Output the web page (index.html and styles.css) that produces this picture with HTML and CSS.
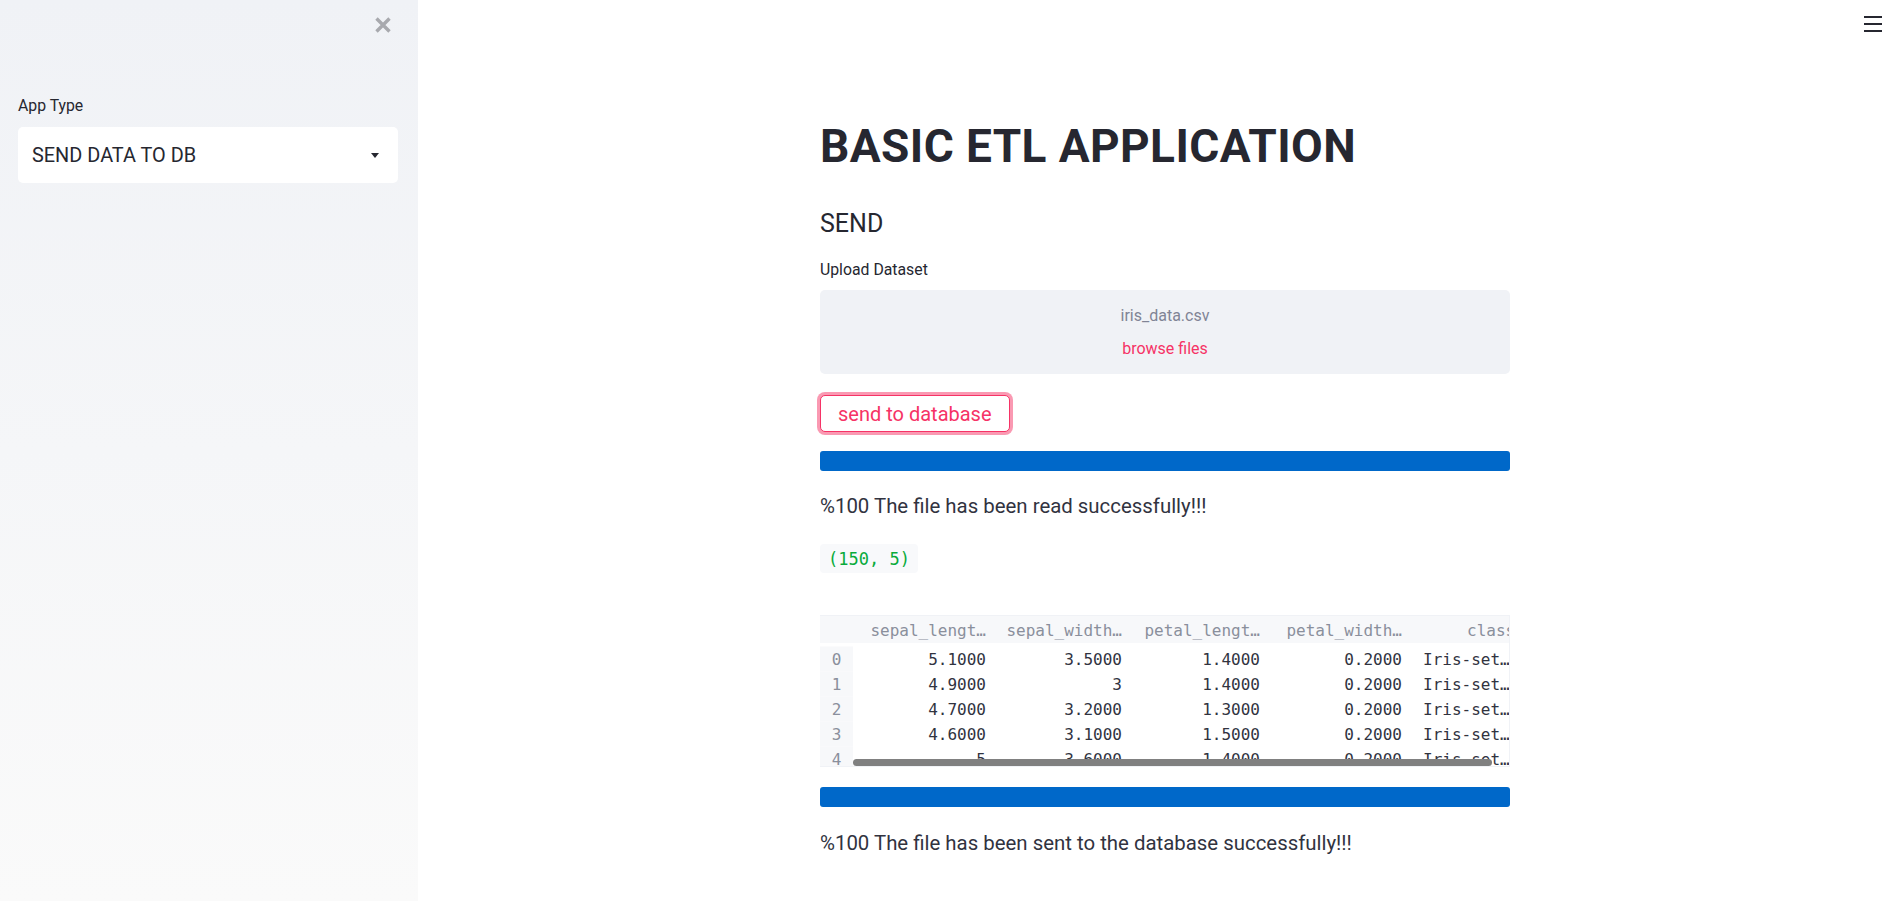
FILE: index.html
```html
<!DOCTYPE html>
<html lang="en">
<head>
<meta charset="utf-8">
<title>Basic ETL Application</title>
<link rel="stylesheet" href="styles.css">
</head>
<body>
<aside class="sidebar">
  <div class="sidebar-head">
    <button class="close-btn" aria-label="Close sidebar">
      <svg width="18" height="18" viewBox="0 0 18 18"><path d="M2.5 2.5 L15.5 15.5 M15.5 2.5 L2.5 15.5" stroke="#a8a9ae" stroke-width="3.4" stroke-linecap="butt"/></svg>
    </button>
  </div>
  <div class="field">
    <label class="field-label">App Type</label>
    <div class="select">
      <span class="select-value">SEND DATA TO DB</span>
      <svg class="select-arrow" width="8" height="5" viewBox="0 0 8 5"><path d="M0 0 H8 L4 5 Z" fill="#262730"/></svg>
    </div>
  </div>
</aside>
<main class="main">
  <header class="toolbar">
    <svg width="18" height="16" viewBox="0 0 18 16"><rect x="0" y="0" width="18" height="2" fill="#262730"/><rect x="0" y="7" width="18" height="2" fill="#262730"/><rect x="0" y="14" width="18" height="2" fill="#262730"/></svg>
  </header>
  <div class="content">
    <h1 class="title">BASIC ETL APPLICATION</h1>
    <h3 class="subtitle">SEND</h3>
    <div class="uploader">
      <div class="uploader-label">Upload Dataset</div>
      <div class="dropzone">
        <div class="file-name">iris_data.csv</div>
        <div class="browse">browse files</div>
      </div>
    </div>
    <button class="send-btn">send to database</button>
    <div class="progress"><div class="progress-fill"></div></div>
    <p class="message msg-read">%100 The file has been read successfully!!!</p>
    <code class="code">(150, 5)</code>
    <div class="dataframe">
      <div class="df-grid">
        <div class="df-head df-idx"></div>
        <div class="df-head">sepal_lengt…</div>
        <div class="df-head">sepal_width…</div>
        <div class="df-head">petal_lengt…</div>
        <div class="df-head">petal_width…</div>
        <div class="df-head df-class">class</div>

        <div class="df-idx">0</div><div class="df-cell">5.1000</div><div class="df-cell">3.5000</div><div class="df-cell">1.4000</div><div class="df-cell">0.2000</div><div class="df-cell df-text">Iris-set…</div>
        <div class="df-idx">1</div><div class="df-cell">4.9000</div><div class="df-cell">3</div><div class="df-cell">1.4000</div><div class="df-cell">0.2000</div><div class="df-cell df-text">Iris-set…</div>
        <div class="df-idx">2</div><div class="df-cell">4.7000</div><div class="df-cell">3.2000</div><div class="df-cell">1.3000</div><div class="df-cell">0.2000</div><div class="df-cell df-text">Iris-set…</div>
        <div class="df-idx">3</div><div class="df-cell">4.6000</div><div class="df-cell">3.1000</div><div class="df-cell">1.5000</div><div class="df-cell">0.2000</div><div class="df-cell df-text">Iris-set…</div>
        <div class="df-idx">4</div><div class="df-cell">5</div><div class="df-cell">3.6000</div><div class="df-cell">1.4000</div><div class="df-cell">0.2000</div><div class="df-cell df-text">Iris-set…</div>
      </div>
      <div class="df-scrollbar"></div>
    </div>
    <div class="progress progress-2"><div class="progress-fill"></div></div>
    <p class="message msg-sent">%100 The file has been sent to the database successfully!!!</p>
  </div>
</main>
</body>
</html>
```

FILE: styles.css
```css
* { box-sizing: border-box; }

html, body {
  margin: 0;
  padding: 0;
  height: 901px;
  overflow: hidden;
}

body {
  display: flex;
  font-family: Roboto, "Liberation Sans", sans-serif;
  color: #262730;
  background: #ffffff;
}

/* Sidebar */
.sidebar {
  width: 418px;
  flex: 0 0 418px;
  height: 901px;
  background: linear-gradient(180deg, #f0f2f6 0%, #fafafa 100%);
  padding: 0 20px 0 18px;
}

.sidebar-head {
  height: 50px;
  display: flex;
  justify-content: flex-end;
  align-items: center;
  padding-right: 6px;
}

.close-btn {
  border: 0;
  background: transparent;
  padding: 0;
  width: 18px;
  height: 18px;
  display: flex;
}

.field {
  margin-top: 46px;
}

.field-label {
  display: block;
  font-size: 15.8px;
  line-height: 20px;
  color: #262730;
  margin-bottom: 11px;
}

.select {
  height: 56px;
  background: #ffffff;
  border-radius: 5px;
  display: flex;
  align-items: center;
  justify-content: space-between;
  padding: 0 19px 0 14px;
}

.select-value {
  font-size: 19.9px;
  color: #262730;
}

.select-arrow {
  display: block;
}

/* Main */
.main {
  flex: 1;
  position: relative;
  height: 901px;
}

.toolbar {
  position: absolute;
  top: 16px;
  right: 12px;
  display: flex;
}

.toolbar svg { display: block; }

.content {
  width: 690px;
  margin-left: 402px;
  padding-top: 118px;
  display: flex;
  flex-direction: column;
  align-items: flex-start;
}

.title {
  margin: 0;
  font-size: 46px;
  line-height: 56px;
  font-weight: 700;
  color: #262730;
  letter-spacing: 0.4px;
}

.subtitle {
  margin: 35px 0 0;
  font-size: 25px;
  line-height: 30px;
  font-weight: 400;
  color: #262730;
}

.uploader {
  margin-top: 21px;
  width: 100%;
}

.uploader-label {
  font-size: 15.8px;
  line-height: 20px;
  color: #262730;
}

.dropzone {
  margin-top: 10px;
  height: 84px;
  background: #f0f2f6;
  border-radius: 5px;
  display: flex;
  flex-direction: column;
  align-items: center;
  padding-top: 16px;
  gap: 13px;
}

.file-name {
  font-size: 16px;
  line-height: 20px;
  color: #808495;
}

.browse {
  font-size: 16px;
  line-height: 20px;
  color: #f63366;
}

.send-btn {
  margin-top: 21px;
  height: 37px;
  padding: 0 17px;
  background: #ffffff;
  border: 1px solid #f63366;
  border-radius: 5px;
  box-shadow: 0 0 0 3px rgba(246, 51, 102, 0.5);
  font-family: inherit;
  font-size: 20px;
  color: #f63366;
  line-height: 1;
}

.progress {
  margin-top: 19px;
  width: 100%;
  height: 20px;
  border-radius: 3px;
  background: #f0f2f6;
  overflow: hidden;
}

.progress-fill {
  width: 100%;
  height: 100%;
  background: #0068c9;
}

.progress-2 {
  margin-top: 20px;
}

.message {
  margin: 21px 0 0;
  font-size: 20.4px;
  line-height: 28px;
  color: #31333f;
}

.msg-sent {
  margin-top: 22px;
}

.code {
  margin-top: 24px;
  height: 29px;
  padding: 0 8px;
  display: flex;
  align-items: center;
  background: #f8f9fb;
  border-radius: 4px;
  font-family: "DejaVu Sans Mono", "Liberation Mono", monospace;
  font-size: 17px;
  color: #09ab3b;
}

/* Dataframe */
.dataframe {
  margin-top: 42px;
  width: 100%;
  height: 152px;
  position: relative;
  overflow: hidden;
  background: #ffffff;
  border: 1px solid #f0f2f6;
  border-left: 0;
}

.df-grid {
  display: grid;
  grid-template-columns: 33px 141px 136px 138px 142px 130px;
  grid-auto-rows: 25px;
  grid-template-rows: 27px;
  font-family: "DejaVu Sans Mono", "Liberation Mono", monospace;
  font-size: 16px;
  line-height: 25px;
  white-space: nowrap;
}

.df-head {
  background: #f7f8fa;
  color: #8a8f9c;
  text-align: right;
  padding-right: 8px;
  line-height: 30px;
  overflow: hidden;
}

.df-idx {
  background: #f7f8fa;
  color: #8a8f9c;
  text-align: center;
}

.df-head.df-idx {
  padding-right: 0;
}

.df-head.df-class {
  text-align: left;
  padding-left: 57px;
  padding-right: 0;
}

.df-cell {
  text-align: right;
  padding-right: 8px;
  color: #31333f;
  overflow: hidden;
}

.df-text {
  text-align: left;
  padding-left: 13px;
  padding-right: 0;
}

.df-grid > div:nth-child(n+7) {
  transform: translateY(3.5px);
}

.df-scrollbar {
  position: absolute;
  left: 33px;
  width: 639px;
  bottom: 0;
  height: 7px;
  border-radius: 4px;
  background: #808080;
}
```
